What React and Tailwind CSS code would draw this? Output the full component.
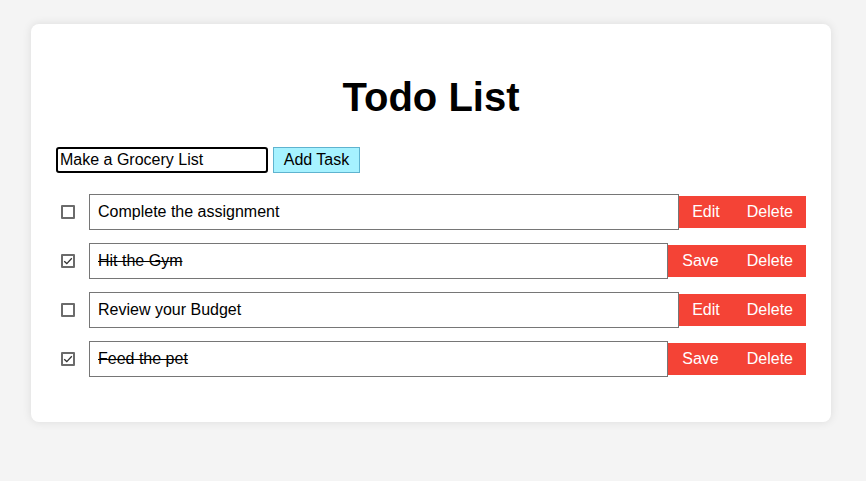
import React from "react";

const tasks = [
  { text: "Complete the assignment", done: false },
  { text: "Hit the Gym", done: true },
  { text: "Review your Budget", done: false },
  { text: "Feed the pet", done: true },
];

function Check({ checked }) {
  return (
    <span className="w-[14px] h-[14px] ml-[5px] mr-[14px] border-2 border-[#6b6b6b] bg-white flex items-center justify-center shrink-0 rounded-[1px]">
      {checked && (
        <svg width="10" height="10" viewBox="0 0 10 10">
          <path d="M1.2 5.2 L3.8 7.6 L8.8 2.2" fill="none" stroke="#333" strokeWidth="1.3" />
        </svg>
      )}
    </span>
  );
}

export default function App() {
  return (
    <div className="min-h-[481px] bg-[#f4f4f4] pt-[24px] px-[31px] text-black" style={{ fontFamily: '"Liberation Sans", Arial, sans-serif' }}>
      <div className="w-[800px] h-[398px] bg-white rounded-[8px] shadow-[0_0_10px_rgba(0,0,0,0.1)] px-[25px] pt-[50px]">
        <h1 className="text-[40px] leading-[46px] font-bold text-center">Todo List</h1>
        <div className="flex mt-[27px] gap-[5px]">
          <div className="w-[212px] h-[26px] border-2 border-black rounded-[3px] pl-[2px] text-[16px] leading-[22px]">Make a Grocery List</div>
          <div className="w-[87px] h-[26px] bg-[#a6f2ff] border border-[#5fb3cf] text-[16px] leading-[24px] text-center">Add Task</div>
        </div>
        <div className="mt-[21px] flex flex-col gap-[13px]">
          {tasks.map((t, i) => (
            <div key={i} className="flex items-center">
              <Check checked={t.done} />
              <div className={`flex-1 h-[36px] border border-[#767676] pl-[8px] text-[16px] leading-[34px] ${t.done ? "line-through" : ""}`}>
                {t.text}
              </div>
              <div className="flex h-[32px] bg-[#f44336] text-white text-[16px] leading-[32px]">
                <span className={t.done ? "pl-[14px] pr-[15px]" : "pl-[13px] pr-[14px]"}>{t.done ? "Save" : "Edit"}</span>
                <span className="pl-[13px] pr-[13px]">Delete</span>
              </div>
            </div>
          ))}
        </div>
      </div>
    </div>
  );
}
